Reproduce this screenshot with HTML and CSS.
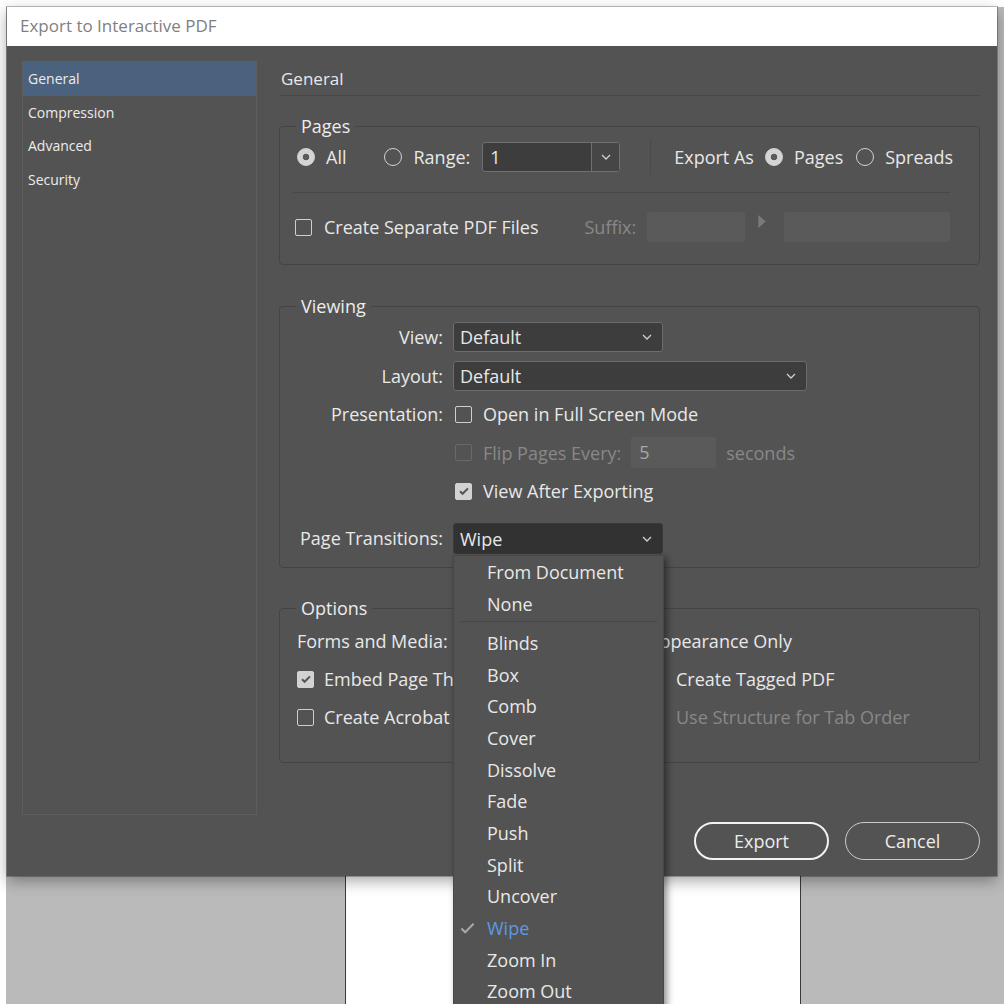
FILE: index.html
```html
<!DOCTYPE html>
<html lang="en">

<head>
    <meta charset="UTF-8">
    <title>Export to Interactive PDF</title>
    <link rel="stylesheet" href="styles.css">
</head>

<body>
    <!-- document behind the dialog -->
    <div class="pasteboard">
        <div class="doc-page"></div>
    </div>

    <div class="dialog">
        <div class="title-bar">Export to Interactive PDF</div>

        <div class="dialog-body">
            <ul class="sidebar">
                <li class="active">General</li>
                <li>Compression</li>
                <li>Advanced</li>
                <li>Security</li>
            </ul>

            <div class="main">
                <h1 class="section-title">General</h1>

                <!-- Pages -->
                <fieldset class="group pages-group">
                    <legend>Pages</legend>
                    <div class="row">
                        <label class="opt opt-all"><span class="radio on"></span>All</label>
                        <label class="opt opt-range"><span class="radio"></span>Range:</label>
                        <div class="combo">
                            <span class="combo-val">1</span>
                            <span class="combo-btn">
                                <svg class="chev" viewBox="0 0 10 6"><path d="M1 1l4 4 4-4"/></svg>
                            </span>
                        </div>
                        <span class="vsep"></span>
                        <span class="export-as">Export As</span>
                        <label class="opt opt-pages"><span class="radio on"></span>Pages</label>
                        <label class="opt opt-spreads"><span class="radio"></span>Spreads</label>
                    </div>
                    <div class="hsep"></div>
                    <div class="row row-files">
                        <label class="opt opt-files"><span class="check"></span>Create Separate PDF Files</label>
                        <span class="dim suffix-lbl">Suffix:</span>
                        <span class="field suffix-a"></span>
                        <svg class="tri" viewBox="0 0 8 14"><path d="M0 0l8 7-8 7z"/></svg>
                        <span class="field suffix-b"></span>
                    </div>
                </fieldset>

                <!-- Viewing -->
                <fieldset class="group viewing-group">
                    <legend>Viewing</legend>
                    <div class="form-grid">
                        <span class="lbl">View:</span>
                        <div class="select sel-short">
                            <span>Default</span>
                            <svg class="chev" viewBox="0 0 10 6"><path d="M1 1l4 4 4-4"/></svg>
                        </div>

                        <span class="lbl">Layout:</span>
                        <div class="select sel-long">
                            <span>Default</span>
                            <svg class="chev" viewBox="0 0 10 6"><path d="M1 1l4 4 4-4"/></svg>
                        </div>

                        <span class="lbl">Presentation:</span>
                        <label class="opt opt-view"><span class="check"></span>Open in Full Screen Mode</label>

                        <span></span>
                        <div class="flip">
                            <label class="opt opt-view dim"><span class="check dis"></span>Flip Pages Every:</label>
                            <span class="field flip-field">5</span>
                            <span class="dim">seconds</span>
                        </div>

                        <span></span>
                        <label class="opt opt-view">
                            <span class="check on"><svg viewBox="0 0 14 14"><path d="M3 7.2l2.6 2.6L11 4.4"/></svg></span>
                            View After Exporting
                        </label>

                        <span class="lbl last">Page Transitions:</span>
                        <div class="select sel-short focused last">
                            <span>Wipe</span>
                            <svg class="chev" viewBox="0 0 10 6"><path d="M1 1l4 4 4-4"/></svg>
                        </div>
                    </div>
                </fieldset>

                <!-- Options (partly under the open list) -->
                <fieldset class="group options-group">
                    <legend>Options</legend>
                    <div class="media-row">
                        <span class="media-lbl">Forms and Media:</span>
                        <span class="clip-left"><span>Appearance Only</span></span>
                    </div>
                    <div class="options-grid">
                        <label class="opt opt-left">
                            <span class="check on"><svg viewBox="0 0 14 14"><path d="M3 7.2l2.6 2.6L11 4.4"/></svg></span>
                            <span class="clip-right">Embed Page Thumbnails</span>
                        </label>
                        <label class="opt opt-right"><span class="check"></span>Create Tagged PDF</label>
                        <label class="opt opt-left"><span class="check"></span><span class="clip-right">Create Acrobat Layers</span></label>
                        <label class="opt opt-right dim"><span class="check dis"></span>Use Structure for Tab Order</label>
                    </div>
                </fieldset>

                <div class="actions">
                    <button class="btn primary">Export</button>
                    <button class="btn">Cancel</button>
                </div>
            </div>
        </div>

        <!-- open Page Transitions list -->
        <ul class="menu">
            <li><span class="mark"></span>From Document</li>
            <li><span class="mark"></span>None</li>
            <li class="sep"></li>
            <li><span class="mark"></span>Blinds</li>
            <li><span class="mark"></span>Box</li>
            <li><span class="mark"></span>Comb</li>
            <li><span class="mark"></span>Cover</li>
            <li><span class="mark"></span>Dissolve</li>
            <li><span class="mark"></span>Fade</li>
            <li><span class="mark"></span>Push</li>
            <li><span class="mark"></span>Split</li>
            <li><span class="mark"></span>Uncover</li>
            <li class="current">
                <span class="mark"><svg viewBox="0 0 16 12"><path d="M1.5 6.5l4 4L14.5 1.5"/></svg></span>Wipe
            </li>
            <li><span class="mark"></span>Zoom In</li>
            <li><span class="mark"></span>Zoom Out</li>
        </ul>
    </div>
</body>

</html>
```

FILE: styles.css
```css
* {
    margin: 0;
    padding: 0;
    box-sizing: border-box;
}

html,
body {
    width: 1004px;
    height: 1004px;
    overflow: hidden;
}

body {
    position: relative;
    background: #fff;
    font-family: "Open Sans", "Noto Sans", sans-serif;
    color: #e8e8e8;
}

/* document behind */
.pasteboard {
    position: absolute;
    left: 6px;
    top: 7px;
    right: 0;
    bottom: 0;
    background: #bababa;
}

.doc-page {
    position: absolute;
    left: 339px;
    top: 0;
    bottom: 0;
    width: 456px;
    background: #fff;
    border-left: 1px solid #3a3a3a;
    border-right: 1px solid #3a3a3a;
}

/* dialog window */
.dialog {
    position: absolute;
    left: 7px;
    top: 7px;
    width: 990px;
    height: 869px;
    background: #535353;
    display: flex;
    flex-direction: column;
    box-shadow: 0 0 0 1px rgba(0, 0, 0, 0.25), 0 5px 14px rgba(0, 0, 0, 0.35);
}

.title-bar {
    height: 39px;
    flex-shrink: 0;
    background: #fff;
    color: #808080;
    font-size: 17px;
    padding: 0 0 3px 13px;
    display: flex;
    align-items: center;
}

.dialog-body {
    flex: 1;
    display: flex;
    padding: 15px 17px 0 15px;
}

.sidebar {
    list-style: none;
    width: 235px;
    height: 754px;
    flex-shrink: 0;
    border: 1px solid #5e5e5e;
    font-size: 14px;
}

.sidebar li {
    height: 33.7px;
    line-height: 33px;
    padding-left: 5px;
    color: #ececec;
}

.sidebar li.active {
    background: #4a627d;
}

.main {
    flex: 1;
    margin-left: 22px;
    display: flex;
    flex-direction: column;
    font-size: 18px;
}

.section-title {
    font-size: 17px;
    font-weight: normal;
    height: 35px;
    line-height: 35px;
    padding-left: 2px;
    border-bottom: 1px solid #484848;
}

/* groups */
.group {
    border: 1px solid #444;
    border-radius: 4px;
    min-width: 0;
    margin: 0;
}

.group legend {
    font-size: 18px;
    line-height: 22px;
    padding: 0 5px;
    color: #ececec;
}

.pages-group {
    margin-top: 19px;
    padding: 5px 16px 22px;
}

.viewing-group {
    margin-top: 30px;
    padding: 5px 16px 13px;
}

.options-group {
    margin-top: 29px;
    padding: 7px 16px 30px;
}

.row {
    display: flex;
    align-items: center;
    height: 30px;
}

.opt {
    display: flex;
    align-items: center;
    gap: 11px;
    white-space: nowrap;
}

.dim {
    color: #888;
}

/* radios and checkboxes */
.radio {
    width: 18px;
    height: 18px;
    flex-shrink: 0;
    border-radius: 50%;
    border: 1.5px solid #d2d2d2;
}

.radio.on {
    border-color: #d4d4d4;
    background: radial-gradient(circle, #5c5c5c 0 3px, #d4d4d4 3.6px);
}

.check {
    width: 17px;
    height: 17px;
    flex-shrink: 0;
    border: 1.5px solid #cfcfcf;
    border-radius: 2px;
    display: flex;
    align-items: center;
    justify-content: center;
}

.check.on {
    background: #d2d2d2;
    border-color: #d2d2d2;
}

.check.dis {
    border-color: #696969;
}

.check svg {
    width: 14px;
    height: 14px;
    fill: none;
    stroke: #555;
    stroke-width: 2;
}

.chev {
    width: 10px;
    height: 6px;
    fill: none;
    stroke: #d0d0d0;
    stroke-width: 1.3;
}

/* pages row */
.opt-all {
    margin-left: 1px;
}

.opt-range {
    margin-left: 38px;
}

.combo {
    margin-left: 12px;
    width: 138px;
    height: 30px;
    display: flex;
    border: 1px solid #707070;
    border-radius: 3px;
    background: #3d3d3d;
}

.combo-val {
    flex: 1;
    padding-left: 7px;
    line-height: 28px;
}

.combo-btn {
    width: 28px;
    border-left: 1px solid #707070;
    background: #464646;
    display: flex;
    align-items: center;
    justify-content: center;
}

.vsep {
    margin-left: 30px;
    width: 1px;
    height: 36px;
    background: #4a4a4a;
}

.export-as {
    margin-left: 23px;
}

.opt-pages {
    margin-left: 11px;
}

.opt-spreads {
    margin-left: 13px;
}

.hsep {
    height: 1px;
    background: #484848;
    margin: 20px 13px 19px -3px;
}

.opt-files {
    margin-left: -1px;
    gap: 12px;
}

.suffix-lbl {
    margin-left: 46px;
}

.field {
    height: 30px;
    background: #5a5a5a;
    border-radius: 2px;
}

.suffix-a {
    margin-left: 11px;
    width: 98px;
}

.tri {
    align-self: flex-start;
    margin: 3px 0 0 13px;
    width: 8px;
    height: 13px;
    fill: #7a7a7a;
}

.suffix-b {
    margin-left: 18px;
    width: 166px;
}

/* viewing grid */
.form-grid {
    display: grid;
    grid-template-columns: 147px 1fr;
    grid-template-rows: repeat(5, 30px) 39.5px;
    column-gap: 10px;
    row-gap: 8.5px;
    align-items: center;
}

.form-grid .lbl {
    text-align: right;
    white-space: nowrap;
}

.form-grid .last {
    align-self: end;
}

.form-grid .lbl.last {
    line-height: 31px;
}

.select {
    height: 30px;
    border: 1px solid #6c6c6c;
    border-radius: 3px;
    background: #3d3d3d;
    display: flex;
    align-items: center;
    justify-content: space-between;
    padding: 0 10px 0 6px;
}

.sel-short {
    width: 210px;
}

.sel-long {
    width: 354px;
}

.select.focused {
    height: 31px;
    background: #323232;
    border-color: #3a3a3a;
}

.opt-view {
    margin-left: 2px;
}

.flip {
    display: flex;
    align-items: center;
}

.flip-field {
    margin: 0 10px 0 10px;
    width: 85px;
    height: 31px;
    padding-left: 8px;
    line-height: 31px;
    color: #a8a8a8;
}

/* options */
.media-row {
    display: grid;
    grid-template-columns: 368px 1fr;
    align-items: center;
    height: 30px;
}

.media-lbl {
    padding-left: 1px;
    white-space: nowrap;
}

/* texts cut by the open list */
.clip-left {
    overflow: hidden;
    white-space: nowrap;
}

.clip-left span {
    display: inline-block;
    margin-left: -16px;
}

.clip-right {
    display: block;
    width: 129px;
    overflow: hidden;
    white-space: nowrap;
}

.options-grid {
    margin-top: 8px;
    display: grid;
    grid-template-columns: 351px 1fr;
    grid-auto-rows: 30px;
    row-gap: 8px;
    align-items: center;
}

.opt-left {
    margin-left: 1px;
    gap: 10px;
}

.opt-right {
    gap: 12px;
}

/* buttons */
.actions {
    margin-top: 59px;
    display: flex;
    justify-content: flex-end;
    gap: 16px;
}

.btn {
    width: 135px;
    height: 38px;
    border-radius: 19px;
    border: 1.5px solid #cbcbcb;
    background: transparent;
    color: #ececec;
    font-family: "Open Sans", "Noto Sans", sans-serif;
    font-size: 18px;
}

.btn.primary {
    border: 2px solid #f2f2f2;
}

/* dropdown list */
.menu {
    position: absolute;
    left: 446px;
    top: 548px;
    width: 211px;
    list-style: none;
    background: #535353;
    border: 1px solid #474747;
    box-shadow: 3px 3px 7px rgba(0, 0, 0, 0.45);
    font-size: 18px;
    padding-bottom: 20px;
}

.menu li {
    height: 31.7px;
    display: flex;
    align-items: center;
    padding-left: 6px;
    color: #e8e8e8;
}

.menu li.sep {
    height: 1px;
    padding: 0;
    margin: 2px 6px 4.6px;
    background: #474747;
}

.menu .mark {
    width: 27px;
    flex-shrink: 0;
    display: flex;
    align-items: center;
}

.menu .mark svg {
    width: 15px;
    height: 12px;
    fill: none;
    stroke: #a8a8a8;
    stroke-width: 2.2;
}

.menu li.current {
    color: #5b9ae4;
}
```
